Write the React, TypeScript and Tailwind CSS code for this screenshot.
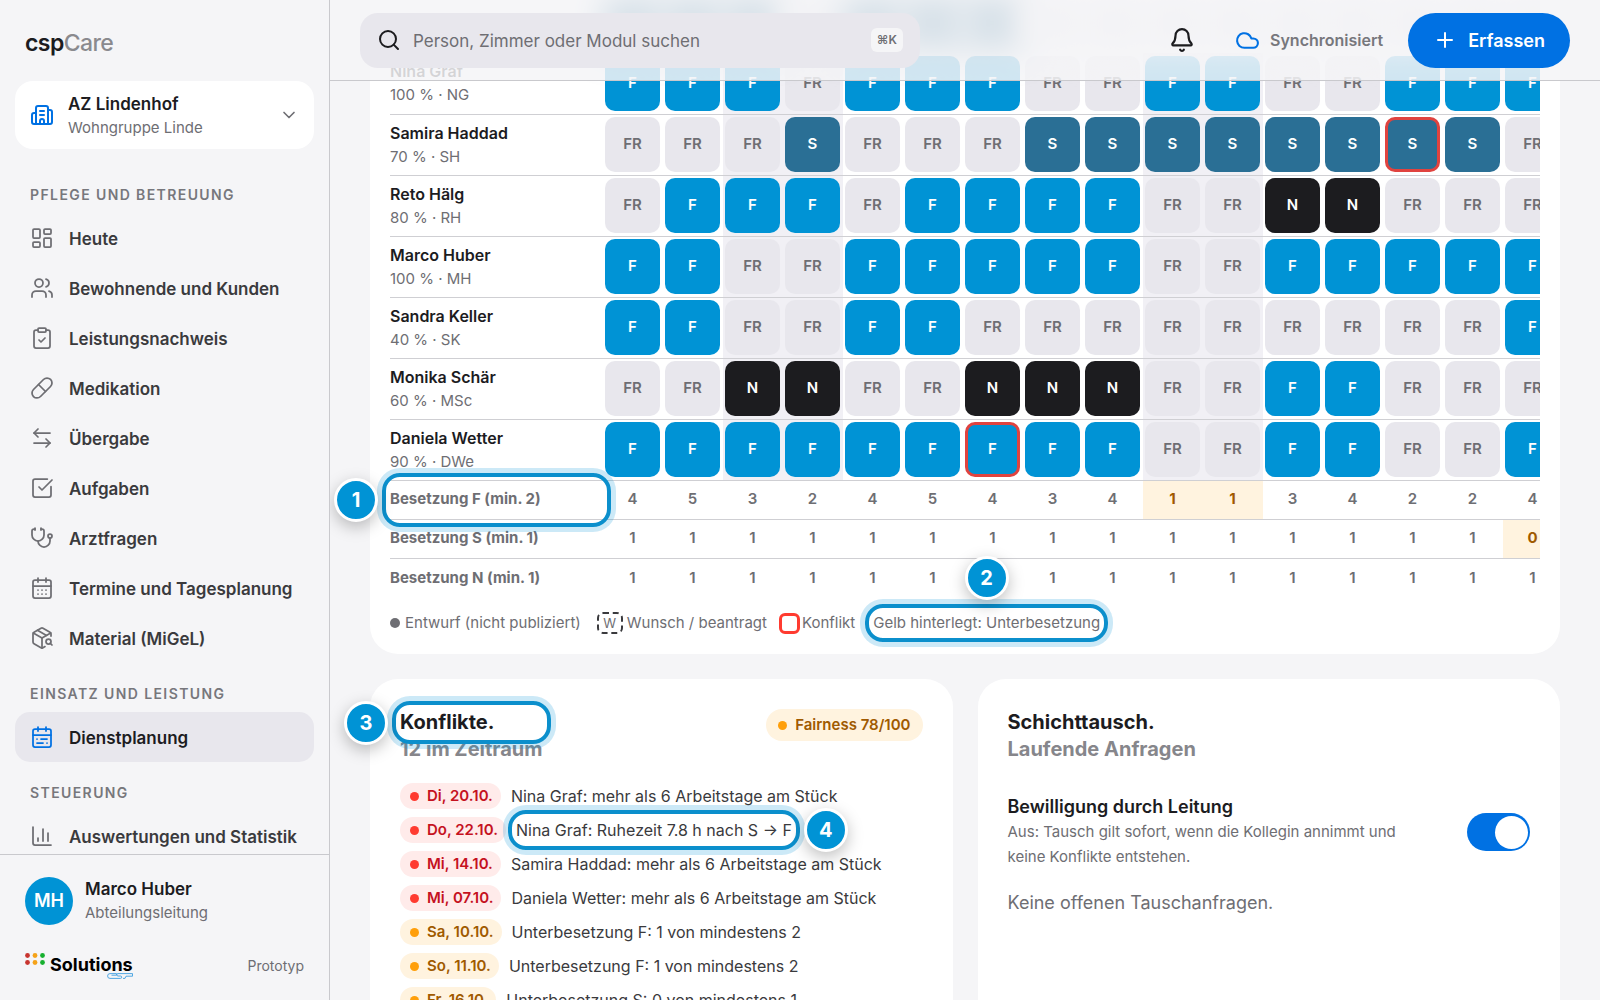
import React, { useState } from 'react';
import {
  ArrowLeftRight,
  Bell,
  Building2,
  CalendarDays,
  CalendarRange,
  ChartColumn,
  ChevronDown,
  ClipboardCheck,
  Cloud,
  LayoutDashboard,
  PackageSearch,
  Pill,
  Plus,
  Search,
  SquareCheckBig,
  Stethoscope,
  Users,
} from 'lucide-react';
import type { LucideIcon } from 'lucide-react';

interface NavItem {
  name: string;
  icon: LucideIcon;
}

interface NavGroup {
  title: string;
  items: NavItem[];
}

const navGroups: NavGroup[] = [
  {
    title: 'Pflege und Betreuung',
    items: [
      { name: 'Heute', icon: LayoutDashboard },
      { name: 'Bewohnende und Kunden', icon: Users },
      { name: 'Leistungsnachweis', icon: ClipboardCheck },
      { name: 'Medikation', icon: Pill },
      { name: 'Übergabe', icon: ArrowLeftRight },
      { name: 'Aufgaben', icon: SquareCheckBig },
      { name: 'Arztfragen', icon: Stethoscope },
      { name: 'Termine und Tagesplanung', icon: CalendarDays },
      { name: 'Material (MiGeL)', icon: PackageSearch },
    ],
  },
  {
    title: 'Einsatz und Leistung',
    items: [{ name: 'Dienstplanung', icon: CalendarRange }],
  },
  {
    title: 'Steuerung',
    items: [{ name: 'Auswertungen und Statistik', icon: ChartColumn }],
  },
];

// A trailing "!" marks a shift with a conflict
const staff = [
  { name: 'Nina Graf', info: '100 % · NG', shifts: 'F F F FR F F F FR FR F F FR FR F F F' },
  { name: 'Samira Haddad', info: '70 % · SH', shifts: 'FR FR FR S FR FR FR S S S S S S S! S FR' },
  { name: 'Reto Hälg', info: '80 % · RH', shifts: 'FR F F F FR F F F F FR FR N N FR FR FR' },
  { name: 'Marco Huber', info: '100 % · MH', shifts: 'F F FR FR F F F F F FR FR F F F F F' },
  { name: 'Sandra Keller', info: '40 % · SK', shifts: 'F F FR FR F F FR FR FR FR FR FR FR FR FR F' },
  { name: 'Monika Schär', info: '60 % · MSc', shifts: 'FR FR N N FR FR N N N FR FR F F FR FR FR' },
  { name: 'Daniela Wetter', info: '90 % · DWe', shifts: 'F F F F F F F! F F FR FR F F FR FR F' },
];

const coverage = [
  { shift: 'F', min: 2, counts: [4, 5, 3, 2, 4, 5, 4, 3, 4, 1, 1, 3, 4, 2, 2, 4] },
  { shift: 'S', min: 1, counts: [1, 1, 1, 1, 1, 1, 1, 1, 1, 1, 1, 1, 1, 1, 1, 0] },
  { shift: 'N', min: 1, counts: [1, 1, 1, 1, 1, 1, 1, 1, 1, 1, 1, 1, 1, 1, 1, 1] },
];

const weekendDays = [2, 3, 9, 10];

// Days of the row that has scrolled away under the top bar
const hiddenShifts = 'S S S FR S S S FR FR FR FR FR FR FR FR FR';

const shiftColors: Record<string, string> = {
  F: 'bg-[#0093d5] text-white',
  S: 'bg-[#2a6f95] text-white',
  N: 'bg-[#1c1c1f] text-white',
  FR: 'bg-[#e8e7ed] text-[#6e6e73]',
};

const conflicts = [
  { date: 'Di, 20.10.', text: 'Nina Graf: mehr als 6 Arbeitstage am Stück', severe: true },
  { date: 'Do, 22.10.', text: 'Nina Graf: Ruhezeit 7.8 h nach S → F', severe: true, step: 4 },
  { date: 'Mi, 14.10.', text: 'Samira Haddad: mehr als 6 Arbeitstage am Stück', severe: true },
  { date: 'Mi, 07.10.', text: 'Daniela Wetter: mehr als 6 Arbeitstage am Stück', severe: true },
  { date: 'Sa, 10.10.', text: 'Unterbesetzung F: 1 von mindestens 2', severe: false },
  { date: 'So, 11.10.', text: 'Unterbesetzung F: 1 von mindestens 2', severe: false },
  { date: 'Fr, 16.10.', text: 'Unterbesetzung S: 0 von mindestens 1', severe: false },
];

const markerSides = {
  left: 'top-1/2 right-full mr-2 -translate-y-1/2',
  right: 'top-1/2 left-full ml-2 -translate-y-1/2',
  top: 'bottom-full left-1/2 mb-2 -translate-x-1/2',
};

// Outline with a numbered badge, laid over the element that it explains
const Marker: React.FC<{ step: number; side: keyof typeof markerSides }> = ({ step, side }) => (
  <span className="pointer-events-none absolute -inset-2 z-10 rounded-[18px] border-4 border-[#0b8fcc] ring-[5px] ring-[#0093d5]/20">
    <span
      className={`absolute flex size-11 items-center justify-center rounded-full border-[3px] border-white bg-[#0093d5] text-xl leading-none font-bold text-white shadow-[0_5px_16px_rgba(0,0,0,0.25)] ${markerSides[side]}`}
    >
      {step}
    </span>
  </span>
);

const SolutionsLogo: React.FC = () => (
  <div className="flex">
    <svg className="h-3 w-5" viewBox="0 0 20 12">
      {['#c8352f', '#f5a31a', '#17b02f'].map((color, i) => (
        <g key={color} fill={color}>
          <circle cx={2.5 + i * 7.5} cy="2.5" r="2.4" />
          <circle cx={2.5 + i * 7.5} cy="9.5" r="2.4" />
        </g>
      ))}
    </svg>
    <div className="ml-[5px]">
      <div className="text-lg leading-6 font-bold text-black">Solutions</div>
      <svg className="-mt-1 ml-auto h-[6px] w-[26px]" viewBox="0 0 26 6" fill="none" stroke="#3f9fe0" strokeWidth="0.9">
        <path d="M9.500.6H3a2.400 2.400 0 0 0 0 4.800h10.500a1.200 1.200 0 0 0 0-2.400H11a1.200 1.200 0 0 1 0-2.400h14.500v2.600h-6.500l-1 2.200h-2M9.500.6v1.600H4.500" />
      </svg>
    </div>
  </div>
);

const Sidebar: React.FC = () => {
  const [active, setActive] = useState('Dienstplanung');

  return (
    <aside className="flex h-full w-[330px] shrink-0 flex-col border-r border-[#c9c9cd]">
      <div className="px-[25px] pt-[26px] pb-[21px] text-[23px] leading-[34px] font-semibold tracking-tight">
        csp<span className="font-medium text-[#8a8a8e]">Care</span>
      </div>
      <button className="mx-[15px] flex h-[68px] shrink-0 items-center gap-[14px] rounded-[18px] bg-white px-[15px] text-left">
        <Building2 className="size-6 text-[#0071e3]" />
        <span className="flex-1 pt-0.5">
          <span className="block text-[17px] leading-[23px] font-semibold">AZ Lindenhof</span>
          <span className="block text-[15px] leading-[23px] text-[#6e6e73]">Wohngruppe Linde</span>
        </span>
        <ChevronDown className="size-5 text-[#6e6e73]" />
      </button>
      <nav className="mt-[15px] min-h-0 flex-1 overflow-hidden px-[15px]">
        {navGroups.map((group) => (
          <div key={group.title}>
            <h2 className="px-[15px] pt-[21px] pb-2 text-sm leading-5 font-semibold tracking-widest text-[#77777c] uppercase">
              {group.title}
            </h2>
            {group.items.map(({ name, icon: Icon }) => (
              <a
                key={name}
                href="#"
                onClick={(e) => {
                  e.preventDefault();
                  setActive(name);
                }}
                className={`flex h-[50px] items-center gap-[15px] rounded-[15px] px-[15px] text-[17px] font-semibold whitespace-nowrap ${
                  active === name ? 'bg-[#e8e7ed] text-[#1c1c1f]' : 'text-[#3a3a3d]'
                }`}
              >
                <Icon
                  strokeWidth={1.75}
                  className={`size-6 shrink-0 ${active === name ? 'text-[#0071e3]' : 'text-[#6e6e73]'}`}
                />
                <span className="pt-[3px]">{name}</span>
              </a>
            ))}
          </div>
        ))}
      </nav>
      <div className="border-t border-[#c9c9cd] px-[25px] pt-[22px] pb-[21px]">
        <div className="flex items-center gap-3">
          <div className="flex size-12 items-center justify-center rounded-full bg-[#0093d5] text-lg font-semibold text-white">
            MH
          </div>
          <div>
            <div className="text-[17px] leading-[23px] font-semibold">Marco Huber</div>
            <div className="text-[15px] leading-[23px] text-[#6e6e73]">Abteilungsleitung</div>
          </div>
        </div>
        <div className="mt-7 flex items-center justify-between">
          <SolutionsLogo />
          <span className="text-sm text-[#6e6e73]">Prototyp</span>
        </div>
      </div>
    </aside>
  );
};

const TopBar: React.FC = () => (
  <header className="absolute inset-x-0 top-0 z-20 flex h-[81px] items-center border-b border-[#c9c9cd] bg-[#f5f5f7]/85 px-[30px]">
    <label className="flex h-[55px] w-[560px] items-center gap-3 rounded-[18px] bg-[#e8e7ed] px-[17px]">
      <Search className="size-6" />
      <input
        type="search"
        aria-label="Suchen"
        placeholder="Person, Zimmer oder Modul suchen"
        className="min-w-0 flex-1 bg-transparent pt-1 text-[17px] outline-none placeholder:text-[#6e6e73]"
      />
      <kbd className="flex h-6 items-center rounded-md bg-[#f5f5f7] px-[6px] font-[Inter,'DejaVu_Sans',sans-serif] text-xs font-semibold text-[#6e6e73]">
        ⌘K
      </kbd>
    </label>
    <div className="ml-auto flex items-center">
      <button aria-label="Benachrichtigungen" className="mr-10">
        <Bell className="size-[26px]" />
      </button>
      <span className="mr-[25px] flex items-center gap-[10px] text-base font-semibold text-[#77777c]">
        <Cloud className="size-[25px] text-[#0071e3]" />
        Synchronisiert
      </span>
      <button className="flex h-[55px] items-center gap-[11px] rounded-full bg-[#0071e3] px-[25px] text-lg font-semibold text-white">
        <Plus className="size-6" />
        <span className="pt-0.5">Erfassen</span>
      </button>
    </div>
  </header>
);

const Roster: React.FC = () => (
  <section className="-mt-2 rounded-b-[28px] bg-white px-5 pb-5">
    {/* wider on the left, so that the badge of step 1 is not clipped */}
    <div className="-ml-16 overflow-hidden pl-16">
      <table className="w-[1173px] table-fixed border-collapse">
        <colgroup>
          <col className="w-[213px]" />
          <col span={16} className="w-[60px]" />
        </colgroup>
        <tbody>
          <tr className="h-[61px]" aria-hidden="true">
            <td className="p-0" />
            {hiddenShifts.split(' ').map((shift, day) => (
              <td key={day} className="p-0">
                <div className={`h-[52px] blur-lg ${shiftColors[shift]}`} />
              </td>
            ))}
          </tr>
          {staff.map((person) => (
            <tr key={person.name} className="h-[61px] border-b border-[#cfcfd3]">
              <th scope="row" className="p-0 text-left font-normal">
                <div className="text-base leading-[23px] font-semibold">{person.name}</div>
                <div className="text-[15px] leading-[23px] text-[#6e6e73]">{person.info}</div>
              </th>
              {person.shifts.split(' ').map((code, day) => {
                const shift = code.replace('!', '');
                return (
                  <td key={day} className={`p-0 pl-0.5 ${weekendDays.includes(day) ? 'bg-[#f1f0f5]' : ''}`}>
                    <div
                      className={`flex size-[55px] items-center justify-center rounded-[10px] text-[15px] font-semibold ${shiftColors[shift]} ${
                        code.endsWith('!') ? 'border-[3px] border-[#e0433f]' : ''
                      }`}
                    >
                      {shift}
                    </div>
                  </td>
                );
              })}
            </tr>
          ))}
          {coverage.map((row) => (
            <tr key={row.shift} className="h-[39px] border-b border-[#cfcfd3] text-[15px] font-semibold text-[#6e6e73] last:border-0">
              <th scope="row" className="relative p-0 text-left">
                Besetzung {row.shift} (min. {row.min})
                {row.shift === 'F' && <Marker step={1} side="left" />}
              </th>
              {row.counts.map((count, day) => (
                <td key={day} className={`p-0 pr-px text-center ${count < row.min ? 'bg-[#fff3df] font-bold text-[#a05a00]' : ''}`}>
                  {count}
                </td>
              ))}
            </tr>
          ))}
        </tbody>
      </table>
    </div>
    <div className="mt-[15px] flex items-center text-[15px] leading-[22px] text-[#6e6e73]">
      <span className="mr-4 flex items-center gap-[5px]">
        <span className="size-[10px] rounded-full bg-[#6e6e73]" />
        Entwurf (nicht publiziert)
      </span>
      <span className="mr-3 flex items-center gap-1">
        <span className="flex h-[22px] w-[26px] items-center justify-center rounded-md border-2 border-dashed border-[#3a3a3d] text-[13px]">
          W
        </span>
        Wunsch / beantragt
      </span>
      <span className="mr-[18px] flex items-center gap-[2px]">
        <span className="size-[21px] rounded-md border-[3px] border-[#ff3b30]" />
        Konflikt
      </span>
      <span className="relative">
        Gelb hinterlegt: Unterbesetzung
        <Marker step={2} side="top" />
      </span>
    </div>
  </section>
);

const Conflicts: React.FC = () => (
  <section className="rounded-[28px] bg-white p-[30px]">
    <div className="flex items-start justify-between">
      <h2 className="text-xl leading-[27px] font-bold">
        <span className="relative block">
          Konflikte.
          <Marker step={3} side="left" />
        </span>
        <span className="block text-[#86868b]">12 im Zeitraum</span>
      </h2>
      <span className="flex h-8 items-center gap-2 rounded-full bg-[#fff3df] px-3 text-[15px] font-semibold text-[#a05a00]">
        <span className="size-[9px] rounded-full bg-[#ff9f0a]" />
        Fairness 78/100
      </span>
    </div>
    <ul className="mt-4">
      {conflicts.map((conflict) => (
        <li key={conflict.date} className="flex h-[34px] items-center gap-[10px]">
          <span
            className={`flex h-[26px] items-center gap-2 rounded-full pr-2 pl-[10px] text-[15px] font-semibold ${
              conflict.severe ? 'bg-[#ffebea] text-[#c5121f]' : 'bg-[#fff3df] text-[#a05a00]'
            }`}
          >
            <span className={`size-[9px] rounded-full ${conflict.severe ? 'bg-[#ff3b30]' : 'bg-[#ff9f0a]'}`} />
            {conflict.date}
          </span>
          <span className="relative text-base leading-6 text-[#3a3a3d]">
            {conflict.text}
            {conflict.step && <Marker step={conflict.step} side="right" />}
          </span>
        </li>
      ))}
    </ul>
  </section>
);

const ShiftSwap: React.FC = () => {
  const [approval, setApproval] = useState(true);

  return (
    <section className="rounded-[28px] bg-white p-[30px]">
      <h2 className="text-xl leading-[27px] font-bold">
        Schichttausch.
        <span className="block text-[#86868b]">Laufende Anfragen</span>
      </h2>
      <label className="mt-8 flex items-center justify-between gap-14">
        <span>
          <span className="block text-lg leading-6 font-semibold">Bewilligung durch Leitung</span>
          <span className="block text-[15px] leading-[25px] text-[#6e6e73]">
            Aus: Tausch gilt sofort, wenn die Kollegin annimmt und keine Konflikte entstehen.
          </span>
        </span>
        <span className="flex shrink-0">
          <input
            type="checkbox"
            role="switch"
            checked={approval}
            onChange={(e) => setApproval(e.target.checked)}
            className="peer sr-only"
          />
          <span className="flex h-[38px] w-[63px] items-center rounded-full bg-[#d1d1d6] px-[2px] peer-checked:justify-end peer-checked:bg-[#0071e3]">
            <span className="size-[33px] rounded-full bg-white" />
          </span>
        </span>
      </label>
      <p className="mt-5 text-lg leading-7 text-[#6e6e73]">Keine offenen Tauschanfragen.</p>
    </section>
  );
};

const App: React.FC = () => (
  <div className="flex h-screen overflow-hidden bg-[#f5f5f7] font-[Inter,sans-serif] text-[#1c1c1f] antialiased">
    <Sidebar />
    <main className="relative min-w-0 flex-1 overflow-hidden">
      <TopBar />
      <div className="px-10">
        <Roster />
        <div className="mt-[25px] grid grid-cols-2 gap-[25px] pb-10">
          <Conflicts />
          <ShiftSwap />
        </div>
      </div>
    </main>
  </div>
);

export default App;
